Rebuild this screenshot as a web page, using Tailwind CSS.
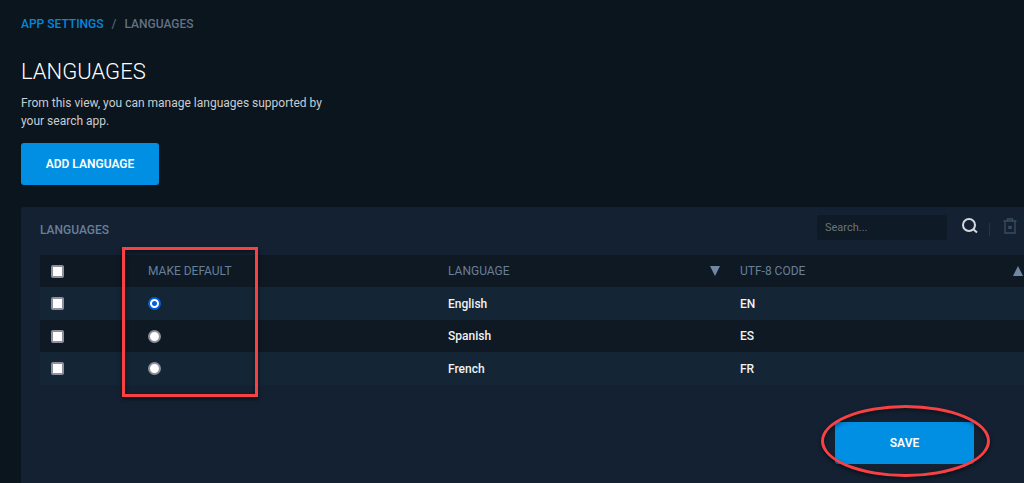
<!DOCTYPE html>
<html lang="en" dir="ltr">
<head>
  <meta charset="utf-8" />
  <meta content="width=device-width, initial-scale=1" name="viewport" />
  <title>App Settings - Languages</title>
  <script src="https://cdn.jsdelivr.net/npm/@tailwindcss/browser@4"></script>
</head>
<body class="bg-[#0a151e] text-[#c9cdd1] font-['Roboto','Liberation_Sans',sans-serif] text-[12px] min-h-screen flex flex-col overflow-x-hidden">
  <!-- Header -->
  <header class="px-[21px] pt-[14px]">
    <nav aria-label="Breadcrumb" class="flex gap-2 leading-5">
      <a href="#" class="font-medium text-[#0687dc]">APP SETTINGS</a>
      <span class="text-[#637185]">/</span>
      <span class="font-medium text-[#637185]">LANGUAGES</span>
    </nav>
    <h1 class="mt-[23px] text-[22px] leading-[30px] font-light text-white">LANGUAGES</h1>
    <p class="mt-[7px] max-w-[320px] leading-[18px]">
      From this view, you can manage languages supported by your search app.
    </p>
    <button type="button" class="mt-[13px] w-[138px] h-[42px] rounded-[3px] bg-[#008fe3] text-white font-semibold hover:bg-[#0a9bf0]">
      ADD LANGUAGE
    </button>
  </header>

  <!-- Languages panel -->
  <main class="mt-[22px] ml-[21px] pl-[19px] flex-grow rounded-tl-[3px] bg-[#132132]">
    <div class="flex items-center justify-between h-12 pr-[6px]">
      <h2 class="-mt-0.5 font-medium text-[#687f98]">LANGUAGES</h2>
      <div class="flex items-center -mt-2">
        <input
          type="search"
          aria-label="Search languages"
          placeholder="Search..."
          class="w-[130px] h-[25px] px-2 rounded-[3px] bg-[#0e1a26] text-[11px] text-[#c9cdd1] placeholder:text-[#6b737c]"
        />
        <button type="button" aria-label="Search" class="ml-[14px]">
          <svg class="w-[18px] h-[18px]" viewBox="0 0 18 18" fill="none" stroke="#d5d9dd" stroke-width="2">
            <circle cx="8" cy="7" r="6" />
            <path d="M12 11 L16 14.5" />
          </svg>
        </button>
        <span class="w-px h-[13px] ml-[10px] mt-1 bg-[#23354a]"></span>
        <button type="button" aria-label="Delete selected" class="ml-3">
          <svg class="w-[16px] h-[18px]" viewBox="0 0 16 18" fill="none" stroke="#394c61" stroke-width="1.4">
            <path d="M1.5 3 H14.5 M5.5 3 V1 H10.5 V3 M3 3 V15 H13 V3" />
            <path d="M6.3 8 L9.7 10.3 M9.7 8 L6.3 10.3" />
          </svg>
        </button>
      </div>
    </div>

    <div class="relative">
      <table class="w-full table-fixed border-collapse text-left">
        <thead>
          <tr class="h-8 bg-[#0e1923] text-[#687f98]">
            <th class="w-24 pl-[11px]" scope="col">
              <input type="checkbox" aria-label="Select all" class="appearance-none block w-[13px] h-[13px] rounded-[2px] border-2 border-[#8f8f9d] bg-white checked:bg-[#0060df]" />
            </th>
            <th class="w-[300px] px-3 font-normal" scope="col">MAKE DEFAULT</th>
            <th class="w-[292px] pl-3 pr-2 font-normal" scope="col">
              <button type="button" class="w-full flex items-center justify-between">
                LANGUAGE
                <svg class="w-[10px] h-[10px]" viewBox="0 0 10 10" fill="#7088a3"><path d="M0 0 H10 L5 10 Z" /></svg>
              </button>
            </th>
            <th class="pl-3 pr-px font-normal" scope="col">
              <button type="button" class="w-full flex items-center justify-between">
                UTF-8 CODE
                <svg class="w-[10px] h-[10px]" viewBox="0 0 10 10" fill="#7088a3"><path d="M0 10 H10 L5 0 Z" /></svg>
              </button>
            </th>
          </tr>
        </thead>
        <tbody class="text-[#f0f2f4] font-medium">
          <tr class="h-[33px] bg-[#142535]">
            <td class="pl-[11px]">
              <input type="checkbox" aria-label="Select English" class="appearance-none block w-[13px] h-[13px] rounded-[2px] border-2 border-[#8f8f9d] bg-white checked:bg-[#0060df]" />
            </td>
            <td class="px-3">
              <input type="radio" name="default" aria-label="Make English default" checked class="appearance-none block w-[13px] h-[13px] rounded-full border-2 border-[#8f8f9d] bg-white checked:border-[#0060df] checked:bg-[radial-gradient(circle,#0060df_2px,#fff_3px)]" />
            </td>
            <td class="px-3">English</td>
            <td class="px-3">EN</td>
          </tr>
          <tr class="h-8 bg-[#0e1923]">
            <td class="pl-[11px]">
              <input type="checkbox" aria-label="Select Spanish" class="appearance-none block w-[13px] h-[13px] rounded-[2px] border-2 border-[#8f8f9d] bg-white checked:bg-[#0060df]" />
            </td>
            <td class="px-3">
              <input type="radio" name="default" aria-label="Make Spanish default" class="appearance-none block w-[13px] h-[13px] rounded-full border-2 border-[#8f8f9d] bg-white checked:border-[#0060df] checked:bg-[radial-gradient(circle,#0060df_2px,#fff_3px)]" />
            </td>
            <td class="px-3">Spanish</td>
            <td class="px-3">ES</td>
          </tr>
          <tr class="h-[33px] bg-[#142535]">
            <td class="pl-[11px]">
              <input type="checkbox" aria-label="Select French" class="appearance-none block w-[13px] h-[13px] rounded-[2px] border-2 border-[#8f8f9d] bg-white checked:bg-[#0060df]" />
            </td>
            <td class="px-3">
              <input type="radio" name="default" aria-label="Make French default" class="appearance-none block w-[13px] h-[13px] rounded-full border-2 border-[#8f8f9d] bg-white checked:border-[#0060df] checked:bg-[radial-gradient(circle,#0060df_2px,#fff_3px)]" />
            </td>
            <td class="px-3">French</td>
            <td class="px-3">FR</td>
          </tr>
        </tbody>
      </table>
      <!-- Default column highlight -->
      <div class="absolute left-[82px] -top-2 w-[136px] h-[150px] border-3 border-[#f94144] shadow-[0_2px_4px_rgba(0,0,0,0.5),inset_0_2px_4px_rgba(0,0,0,0.5)] pointer-events-none"></div>
    </div>

    <div class="flex justify-end pt-[37px] pr-[50px] pb-[19px]">
      <div class="relative">
        <button type="button" class="block w-[139px] h-[42px] rounded-[3px] bg-[#008fe3] text-white font-semibold hover:bg-[#0a9bf0]">
          SAVE
        </button>
        <!-- Save highlight -->
        <div class="absolute -left-[14px] -top-[17px] w-[169px] h-[72px] rounded-[50%] border-3 border-[#f94144] shadow-[0_2px_4px_rgba(0,0,0,0.5),inset_0_2px_4px_rgba(0,0,0,0.4)] pointer-events-none"></div>
      </div>
    </div>
  </main>
</body>
</html>
